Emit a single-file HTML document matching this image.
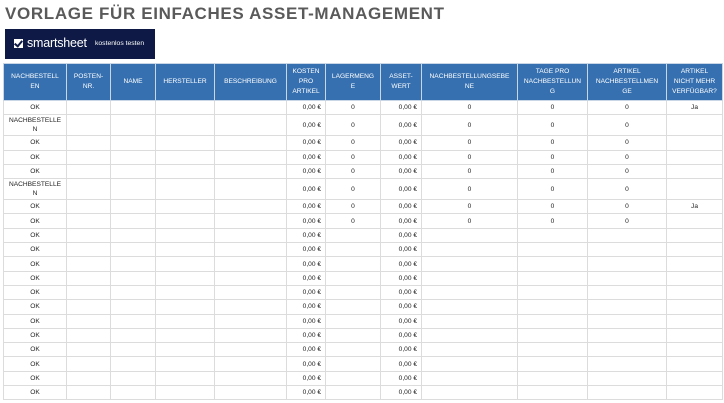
<!DOCTYPE html>
<html><head><meta charset="utf-8"><style>
body{margin:0;width:724px;height:403px;background:#fff;overflow:hidden;font-family:"Liberation Sans",Arial,sans-serif;position:relative}
h1{position:absolute;left:5px;top:4px;margin:0;font-size:17px;font-weight:bold;color:#5a5a5a;letter-spacing:0.65px;white-space:nowrap}
.logo{position:absolute;left:5px;top:29px;width:150px;height:30px;background:#0e1a45;color:#fff}
.logo .ck{position:absolute;left:9px;top:10px;width:9px;height:9px;background:#fff}
.logo .ck:after{content:"";position:absolute;left:2px;top:0px;width:3px;height:6px;border:solid #0e1a45;border-width:0 2px 2px 0;transform:rotate(40deg)}
.logo .s{position:absolute;left:22px;top:7px;font-size:12.5px;letter-spacing:-0.2px}
.logo .k{position:absolute;left:90px;top:11px;font-size:6.8px}
table{position:absolute;left:3px;top:63px;border-collapse:collapse;table-layout:fixed;width:719px}
td,th{border:1px solid #dcdcdc;font-size:6.6px;color:#222;text-align:center;padding:0 1px;overflow:hidden;line-height:9px}
th{background:#3670b0;color:#fff;font-weight:normal;border-color:#c8d6e6;height:36px;line-height:10px}
td.r{text-align:right;padding-right:4px}
tr.n td{height:13.3px}
tr.t td{height:20px}
</style></head><body>
<h1>VORLAGE FÜR EINFACHES ASSET-MANAGEMENT</h1>
<div class="logo"><div class="ck"></div><div class="s">smartsheet</div><div class="k">kostenlos testen</div></div>
<table>
<colgroup><col style="width:63px"><col style="width:44px"><col style="width:45px"><col style="width:59px"><col style="width:72px"><col style="width:39px"><col style="width:55px"><col style="width:41px"><col style="width:96px"><col style="width:70px"><col style="width:79px"><col style="width:56px"></colgroup>
<tr><th>NACHBESTELL<br>EN</th><th>POSTEN-<br>NR.</th><th>NAME</th><th>HERSTELLER</th><th>BESCHREIBUNG</th><th>KOSTEN<br>PRO<br>ARTIKEL</th><th>LAGERMENG<br>E</th><th>ASSET-<br>WERT</th><th>NACHBESTELLUNGSEBE<br>NE</th><th>TAGE PRO<br>NACHBESTELLUN<br>G</th><th>ARTIKEL<br>NACHBESTELLMEN<br>GE</th><th>ARTIKEL<br>NICHT MEHR<br>VERFÜGBAR?</th></tr>
<tr class="n"><td>OK</td><td></td><td></td><td></td><td></td><td class="r">0,00 €</td><td>0</td><td class="r">0,00 €</td><td>0</td><td>0</td><td>0</td><td>Ja</td></tr>
<tr class="t"><td>NACHBESTELLE<br>N</td><td></td><td></td><td></td><td></td><td class="r">0,00 €</td><td>0</td><td class="r">0,00 €</td><td>0</td><td>0</td><td>0</td><td></td></tr>
<tr class="n"><td>OK</td><td></td><td></td><td></td><td></td><td class="r">0,00 €</td><td>0</td><td class="r">0,00 €</td><td>0</td><td>0</td><td>0</td><td></td></tr>
<tr class="n"><td>OK</td><td></td><td></td><td></td><td></td><td class="r">0,00 €</td><td>0</td><td class="r">0,00 €</td><td>0</td><td>0</td><td>0</td><td></td></tr>
<tr class="n"><td>OK</td><td></td><td></td><td></td><td></td><td class="r">0,00 €</td><td>0</td><td class="r">0,00 €</td><td>0</td><td>0</td><td>0</td><td></td></tr>
<tr class="t"><td>NACHBESTELLE<br>N</td><td></td><td></td><td></td><td></td><td class="r">0,00 €</td><td>0</td><td class="r">0,00 €</td><td>0</td><td>0</td><td>0</td><td></td></tr>
<tr class="n"><td>OK</td><td></td><td></td><td></td><td></td><td class="r">0,00 €</td><td>0</td><td class="r">0,00 €</td><td>0</td><td>0</td><td>0</td><td>Ja</td></tr>
<tr class="n"><td>OK</td><td></td><td></td><td></td><td></td><td class="r">0,00 €</td><td>0</td><td class="r">0,00 €</td><td>0</td><td>0</td><td>0</td><td></td></tr>
<tr class="n"><td>OK</td><td></td><td></td><td></td><td></td><td class="r">0,00 €</td><td></td><td class="r">0,00 €</td><td></td><td></td><td></td><td></td></tr>
<tr class="n"><td>OK</td><td></td><td></td><td></td><td></td><td class="r">0,00 €</td><td></td><td class="r">0,00 €</td><td></td><td></td><td></td><td></td></tr>
<tr class="n"><td>OK</td><td></td><td></td><td></td><td></td><td class="r">0,00 €</td><td></td><td class="r">0,00 €</td><td></td><td></td><td></td><td></td></tr>
<tr class="n"><td>OK</td><td></td><td></td><td></td><td></td><td class="r">0,00 €</td><td></td><td class="r">0,00 €</td><td></td><td></td><td></td><td></td></tr>
<tr class="n"><td>OK</td><td></td><td></td><td></td><td></td><td class="r">0,00 €</td><td></td><td class="r">0,00 €</td><td></td><td></td><td></td><td></td></tr>
<tr class="n"><td>OK</td><td></td><td></td><td></td><td></td><td class="r">0,00 €</td><td></td><td class="r">0,00 €</td><td></td><td></td><td></td><td></td></tr>
<tr class="n"><td>OK</td><td></td><td></td><td></td><td></td><td class="r">0,00 €</td><td></td><td class="r">0,00 €</td><td></td><td></td><td></td><td></td></tr>
<tr class="n"><td>OK</td><td></td><td></td><td></td><td></td><td class="r">0,00 €</td><td></td><td class="r">0,00 €</td><td></td><td></td><td></td><td></td></tr>
<tr class="n"><td>OK</td><td></td><td></td><td></td><td></td><td class="r">0,00 €</td><td></td><td class="r">0,00 €</td><td></td><td></td><td></td><td></td></tr>
<tr class="n"><td>OK</td><td></td><td></td><td></td><td></td><td class="r">0,00 €</td><td></td><td class="r">0,00 €</td><td></td><td></td><td></td><td></td></tr>
<tr class="n"><td>OK</td><td></td><td></td><td></td><td></td><td class="r">0,00 €</td><td></td><td class="r">0,00 €</td><td></td><td></td><td></td><td></td></tr>
<tr class="n"><td>OK</td><td></td><td></td><td></td><td></td><td class="r">0,00 €</td><td></td><td class="r">0,00 €</td><td></td><td></td><td></td><td></td></tr>
</table>
</body></html>
